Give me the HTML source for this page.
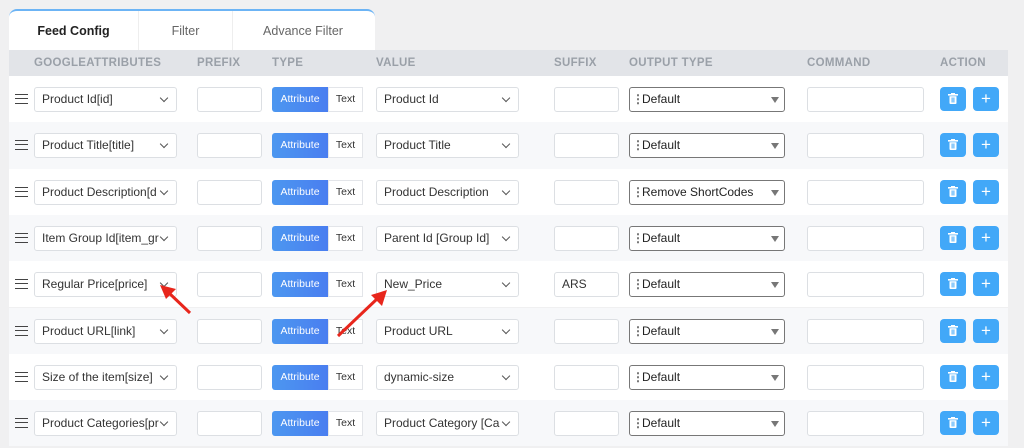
<!DOCTYPE html>
<html><head><style>
*{box-sizing:border-box;margin:0;padding:0}
body{width:1024px;height:448px;background:#f0f0f1;font-family:"Liberation Sans",sans-serif;position:relative;overflow:hidden}
.tabs{position:absolute;left:9px;top:9px;width:366px;height:42px;background:#fff;border-radius:8px 8px 0 0;border-top:2px solid #6cb4f5;display:flex}
.tab{height:40px;line-height:40px;text-align:center;font-size:12.5px;color:#666;border-right:1px solid #eee}
.head{position:absolute;left:9px;top:50px;width:999px;height:26px;background:#e2e4e8}
.h{position:absolute;top:7px;font-size:11.5px;font-weight:bold;color:#9aa0a8;letter-spacing:.3px}
.row{position:absolute;left:9px;width:999px;height:46.3px}
.row>*{position:absolute}
.in{border:1px solid #dcdfe3;background:#fff;border-radius:3px;height:25px;top:11px}
.sel{font-size:12px;color:#333;line-height:23px;padding-left:7px;padding-right:20px;white-space:nowrap;overflow:hidden}
.chev{position:absolute;right:9px;top:7px;width:6px;height:6px;border-right:1.5px solid #555;border-bottom:1.5px solid #555;transform:rotate(45deg)}
.ham{left:6px;top:18px;width:13px;height:10px;border-top:1.5px solid #444;border-bottom:1.5px solid #444}
.ham:after{content:"";position:absolute;left:0;right:0;top:3px;border-top:1.5px solid #444}
.att{left:263px;top:11px;width:56px;height:25px;background:linear-gradient(90deg,#4c97f0,#4a7ef0);color:#fff;font-size:10.5px;line-height:25px;text-align:center;border-radius:3px 0 0 3px}
.txt{left:319px;top:11px;width:35px;height:25px;border:1px solid #e3e5e9;background:#fff;font-size:10.5px;line-height:23px;text-align:center;color:#333}
.out{border:1px solid #777;border-radius:3px;height:25px;top:11px;font-size:12px;line-height:23px;padding-left:12px;color:#222;background:#fff}
.out:before{content:"⋮";position:absolute;left:2px;top:0;font-weight:bold;color:#666}
.tri{position:absolute;right:5px;top:9px;border-left:4px solid transparent;border-right:4px solid transparent;border-top:6px solid #777}
.btn{top:11px;width:26px;height:24px;background:#42a8f8;border-radius:4px;color:#fff;text-align:center;font-size:17px;line-height:23px}
</style></head><body>
<div class="tabs">
<div class="tab" style="width:130px;color:#222;font-weight:bold">Feed Config</div>
<div class="tab" style="width:94px">Filter</div>
<div class="tab" style="width:140px;border:none">Advance Filter</div>
</div>
<div class="head">
<span class="h" style="left:25px">GOOGLEATTRIBUTES</span>
<span class="h" style="left:188px">PREFIX</span>
<span class="h" style="left:263px">TYPE</span>
<span class="h" style="left:367px">VALUE</span>
<span class="h" style="left:545px">SUFFIX</span>
<span class="h" style="left:620px">OUTPUT TYPE</span>
<span class="h" style="left:798px">COMMAND</span>
<span class="h" style="left:931px">ACTION</span>
</div>
<div id="rows"></div>
<script>
var d=[["Product Id[id]","Product Id","","Default"],["Product Title[title]","Product Title","","Default"],["Product Description[d","Product Description","","Remove ShortCodes"],["Item Group Id[item_gr","Parent Id [Group Id]","","Default"],["Regular Price[price]","New_Price","ARS","Default"],["Product URL[link]","Product URL","","Default"],["Size of the item[size]","dynamic-size","","Default"],["Product Categories[pr","Product Category [Ca","","Default"]];
var h="";
d.forEach(function(r,i){
var top=76+i*46.3;
h+='<div class="row" style="top:'+top+'px;background:'+(i%2?'#f7f8fa':'#fff')+'">'+
'<div class="ham"></div>'+
'<div class="in sel" style="left:25px;width:143px">'+r[0]+'<span class="chev"></span></div>'+
'<div class="in" style="left:188px;width:65px"></div>'+
'<div class="att">Attribute</div><div class="txt">Text</div>'+
'<div class="in sel" style="left:367px;width:143px">'+r[1]+'<span class="chev"></span></div>'+
'<div class="in sel" style="left:545px;width:65px">'+r[2]+'</div>'+
'<div class="out" style="left:620px;width:156px">'+r[3]+'<span class="tri"></span></div>'+
'<div class="in" style="left:798px;width:117px"></div>'+
'<div class="btn" style="left:931px"><svg width="10" height="11" viewBox="0 0 10 11" style="margin-top:6px"><rect x="0" y="1" width="10" height="1.6" fill="#fff"/><rect x="3" y="0" width="4" height="1.5" fill="#fff"/><path d="M1.5 3.2h7v6.8a1 1 0 0 1-1 1h-5a1 1 0 0 1-1-1z" fill="#fff"/><rect x="3.6" y="4.5" width="1" height="5" fill="#42a8f8"/><rect x="5.4" y="4.5" width="1" height="5" fill="#42a8f8"/></svg></div>'+
'<div class="btn" style="left:964px">+</div></div>';
});
document.getElementById("rows").innerHTML=h;
</script>
<svg style="position:absolute;left:0;top:0" width="1024" height="448">
<line x1="190" y1="313" x2="168" y2="292" stroke="#e8261c" stroke-width="3"/>
<polygon points="160,285 176,289 166,299" fill="#e8261c"/>
<line x1="338" y1="336" x2="378" y2="298" stroke="#e8261c" stroke-width="3"/>
<polygon points="387,290 382,306 371,295" fill="#e8261c"/>
</svg>
</body></html>
